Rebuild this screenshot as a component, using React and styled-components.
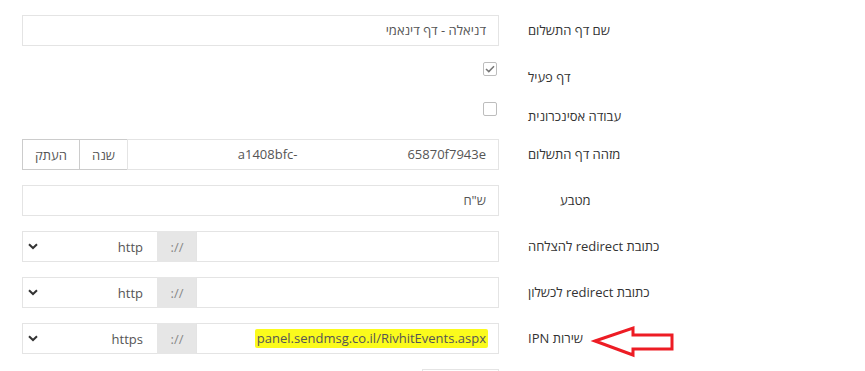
import React from 'react';
import styled, { createGlobalStyle } from 'styled-components';

const Global = createGlobalStyle`
  html, body { margin: 0; padding: 0; background: #fff; }
  body {
    font-family: "Open Sans", "Liberation Sans", sans-serif;
    font-size: 13px;
    color: #333;
    width: 865px;
    height: 371px;
    overflow: hidden;
  }
`;

const Form = styled.div`
  height: 371px;
  box-sizing: border-box;
  overflow: hidden;
  padding: 15px 0 0 22px;
  display: flex;
  flex-direction: column;
  gap: 15px;
`;

const Row = styled.div`
  position: relative;
  flex: none;
  display: flex;
  align-items: flex-start;
  gap: 29px;
  height: ${(p) => (p.$h ? `${p.$h}px` : 'auto')};
`;

const Control = styled.div`
  width: 477px;
  flex: none;
  display: flex;
  justify-content: ${(p) => (p.$end ? 'flex-end' : 'flex-start')};
  padding-top: ${(p) => p.$pt || 0}px;
  padding-right: ${(p) => p.$pr || 0}px;
  box-sizing: border-box;
`;

const Label = styled.label`
  direction: rtl;
  padding-top: ${(p) => (p.$pt ?? 7)}px;
  margin-left: ${(p) => p.$indent || 0}px;
  line-height: 17px;
  color: #333;
  white-space: nowrap;
`;

const Field = styled.div`
  flex: 1;
  height: 31px;
  box-sizing: border-box;
  border: 1px solid #e4e4e4;
  margin-left: ${(p) => (p.$joined ? '-1px' : '0')};
  padding: 0 12px;
  display: flex;
  align-items: center;
  gap: ${(p) => p.$gap || 0}px;
  direction: rtl;
  color: #555;
  line-height: 17px;
  white-space: nowrap;
  overflow: hidden;
  ${(p) => (p.$w ? `flex: none; width: ${p.$w}px;` : '')}
`;

const Ltr = styled.span`
  direction: ltr;
  unicode-bidi: isolate;
`;

const Highlight = styled.span`
  direction: ltr;
  unicode-bidi: isolate;
  background: #fbfb1c;
  padding: 1px 2px;
  border-radius: 2px;
  margin-right: -2px;
`;

const Button = styled.div`
  flex: none;
  width: ${(p) => p.$w}px;
  height: 31px;
  box-sizing: border-box;
  border: 1px solid #ccc;
  background: #fff;
  margin-left: ${(p) => (p.$joined ? '-1px' : '0')};
  display: flex;
  align-items: center;
  justify-content: center;
  color: #555;
  direction: rtl;
`;

const Select = styled.div`
  flex: none;
  width: 136px;
  height: 31px;
  box-sizing: border-box;
  border: 1px solid #e4e4e4;
  display: flex;
  align-items: center;
  justify-content: space-between;
  padding: 0 14px 0 5px;
  color: #555;
`;

const Addon = styled.div`
  flex: none;
  width: 40px;
  height: 31px;
  box-sizing: border-box;
  margin-left: -1px;
  background: #e6e6e6;
  display: flex;
  align-items: center;
  justify-content: center;
  color: #888;
`;

const Check = styled.div`
  width: 14px;
  height: 14px;
  box-sizing: border-box;
  border: 1px solid #bdbdbd;
  border-radius: 2px;
  background: #fff;
  display: flex;
  align-items: center;
  justify-content: center;
`;

const Arrow = styled.svg`
  position: absolute;
  left: 571px;
  top: 2px;
  overflow: visible;
`;

const Chevron = () => (
  <svg width="10" height="7" viewBox="0 0 10 7">
    <path d="M1 1.2 L5 5 L9 1.2" fill="none" stroke="#333" strokeWidth="2" />
  </svg>
);

const SchemeRow = ({ label, scheme, children }) => (
  <Row>
    <Control>
      <Select>
        <Chevron />
        <span>{scheme}</span>
      </Select>
      <Addon>://</Addon>
      <Field $joined>{children}</Field>
    </Control>
    <Label>{label}</Label>
  </Row>
);

export default function App() {
  return (
    <>
      <Global />
      <Form>
        <Row>
          <Control>
            <Field>דניאלה - דף דינאמי</Field>
          </Control>
          <Label>שם דף התשלום</Label>
        </Row>

        <Row $h={25}>
          <Control $end $pt={1} $pr={2}>
            <Check>
              <svg width="10" height="8" viewBox="0 0 10 8">
                <path d="M1 4 L3.8 6.6 L9 1.2" fill="none" stroke="#777" strokeWidth="1.5" />
              </svg>
            </Check>
          </Control>
          <Label $pt={8}>דף פעיל</Label>
        </Row>

        <Row $h={23}>
          <Control $end $pt={1} $pr={2}>
            <Check />
          </Control>
          <Label $pt={7}>עבודה אסינכרונית</Label>
        </Row>

        <Row>
          <Control>
            <Button $w={58}>העתק</Button>
            <Button $w={49} $joined>שנה</Button>
            <Field $joined $gap={110}>
              <Ltr>65870f7943e</Ltr>
              <Ltr>a1408bfc-</Ltr>
            </Field>
          </Control>
          <Label>מזהה דף התשלום</Label>
        </Row>

        <Row>
          <Control>
            <Field>ש"ח</Field>
          </Control>
          <Label $indent={32}>מטבע</Label>
        </Row>

        <SchemeRow label="כתובת redirect להצלחה" scheme="http" />
        <SchemeRow label="כתובת redirect לכשלון" scheme="http" />

        <Row>
          <Control>
            <Select>
              <Chevron />
              <span>https</span>
            </Select>
            <Addon>://</Addon>
            <Field $joined>
              <Highlight>panel.sendmsg.co.il/RivhitEvents.aspx</Highlight>
            </Field>
          </Control>
          <Label>שירות IPN</Label>
          <Arrow width="82" height="33" viewBox="0 0 82 33">
            <polygon
              points="2,16 40,3 40,10 79,10 79,24 40,24 40,30"
              fill="#fff"
              stroke="#ed1c24"
              strokeWidth="3"
              strokeLinejoin="miter"
            />
          </Arrow>
        </Row>

        <Row>
          <Control $end>
            <Field $w={77} />
          </Control>
        </Row>
      </Form>
    </>
  );
}
